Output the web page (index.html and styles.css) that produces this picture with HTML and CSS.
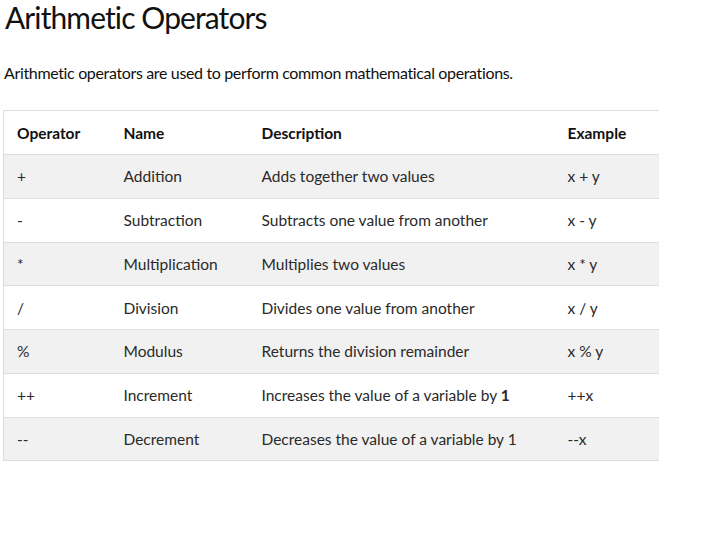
FILE: index.html
```html
<!DOCTYPE html>
<html>
<head>
<meta charset="utf-8">
<link rel="stylesheet" href="styles.css">
</head>
<body>
<h1 class="title">Arithmetic Operators</h1>
<p class="intro">Arithmetic operators are used to perform common mathematical operations.</p>
<table class="ops">
  <colgroup>
    <col class="c1"><col class="c2"><col class="c3"><col class="c4">
  </colgroup>
  <tr class="head"><th>Operator</th><th>Name</th><th>Description</th><th>Example</th></tr>
  <tr><td>+</td><td>Addition</td><td>Adds together two values</td><td>x + y</td></tr>
  <tr><td>-</td><td>Subtraction</td><td>Subtracts one value from another</td><td>x - y</td></tr>
  <tr><td>*</td><td>Multiplication</td><td>Multiplies two values</td><td>x * y</td></tr>
  <tr><td>/</td><td>Division</td><td>Divides one value from another</td><td>x / y</td></tr>
  <tr><td>%</td><td>Modulus</td><td>Returns the division remainder</td><td>x % y</td></tr>
  <tr><td>++</td><td>Increment</td><td>Increases the value of a variable by <b>1</b></td><td>++x</td></tr>
  <tr><td>--</td><td>Decrement</td><td>Decreases the value of a variable by 1</td><td>--x</td></tr>
</table>
</body>
</html>
```
FILE: styles.css
```css
html, body {
  margin: 0;
  padding: 0;
  background: #fff;
  color: #000;
  font-family: "Lato", "Open Sans", sans-serif;
}
body {
  padding: 0 0 0 3px;
}
.title {
  margin: 0;
  padding: 0 0 0 2px;
  font-size: 30px;
  font-weight: 400;
  letter-spacing: -0.9px;
  line-height: 34px;
  height: 36px;
  color: #111;
}
.intro {
  margin: 26px 0 0 1px;
  font-size: 16px;
  letter-spacing: -0.35px;
  line-height: 22px;
  color: #111;
}
.ops {
  margin-top: 26px;
  width: 655px;
  border-collapse: collapse;
  table-layout: fixed;
  border-left: 1px solid #ddd;
  border-top: 1px solid #ddd;
  font-size: 15.5px;
}
.c1 { width: 107px; }
.c2 { width: 138px; }
.c3 { width: 306px; }
.c4 { width: 104px; }
.ops th, .ops td {
  height: 42.75px;
  padding: 0 0 0 13px;
  text-align: left;
  border-bottom: 1px solid #ddd;
  vertical-align: middle;
  color: #2a2a2a;
  white-space: nowrap;
}
.ops th {
  height: 43px;
  font-weight: 700;
  color: #111;
}
.ops tr:nth-child(even) td {
  background: #f1f1f1;
}
```
